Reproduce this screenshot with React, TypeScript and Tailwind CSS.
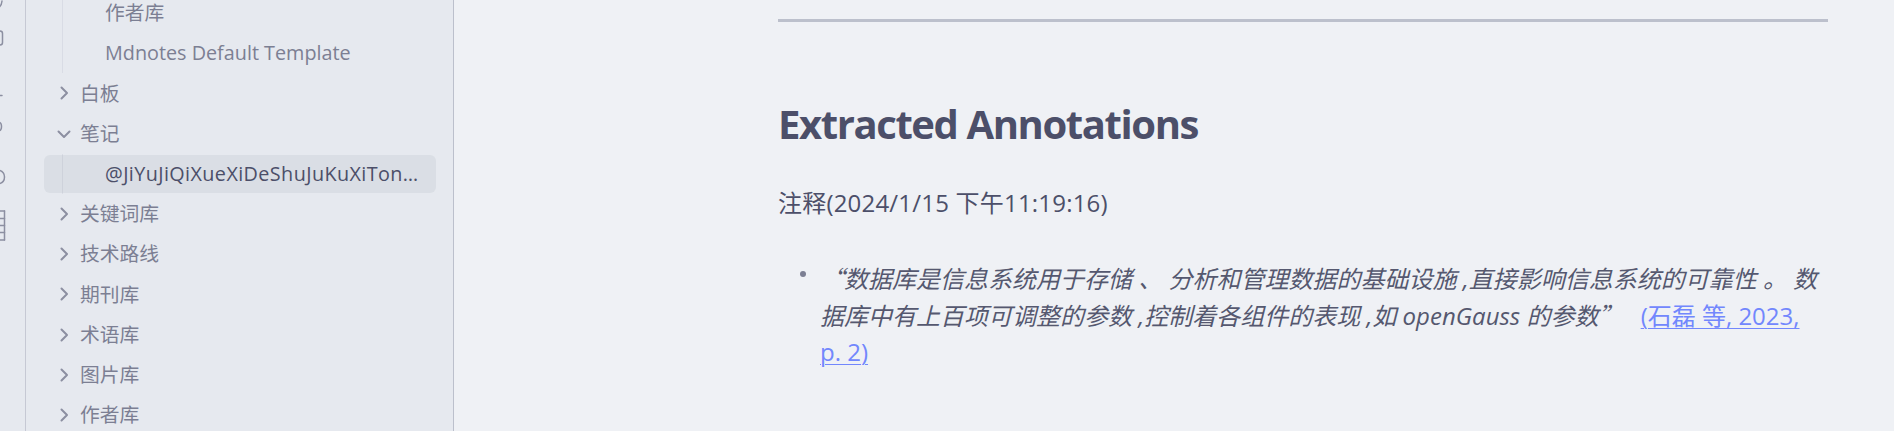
import React from "react";

function ChevronRight() {
  return (
    <svg width="16" height="16" viewBox="0 0 16 16" fill="none" className="shrink-0">
      <path d="M5.5 2.5 L11 8 L5.5 13.5" stroke="#8c8fa1" strokeWidth="2" strokeLinecap="round" strokeLinejoin="round" />
    </svg>
  );
}

function ChevronDown() {
  return (
    <svg width="16" height="16" viewBox="0 0 16 16" fill="none" className="shrink-0">
      <path d="M2.5 5.5 L8 11 L13.5 5.5" stroke="#8c8fa1" strokeWidth="2" strokeLinecap="round" strokeLinejoin="round" />
    </svg>
  );
}

function FolderRow({ name, open }: { name: string; open?: boolean }) {
  return (
    <div className="ml-[18px] w-[392px] h-[40.2px] py-px">
      <div className="h-full flex items-center pl-[12px] gap-[8px] text-[19.8px] text-[#7c7f93]">
        {open ? <ChevronDown /> : <ChevronRight />}
        <span>{name}</span>
      </div>
    </div>
  );
}

function ChildRow({ name, active }: { name: string; active?: boolean }) {
  return (
    <div className="h-[40.2px] py-px">
      <div
        className={
          active
            ? "-ml-[19px] w-[392px] h-full rounded-md flex items-center pl-[61px] text-[19.8px] tracking-[0.4px] text-[#4c4f69] bg-[#4c4f69]/[0.07]"
            : "-ml-[19px] w-[392px] h-full rounded-md flex items-center pl-[61px] text-[19.8px] text-[#7c7f93]"
        }
      >
        <span className="truncate pr-[16px]">{name}</span>
      </div>
    </div>
  );
}

function Ribbon() {
  return (
    <div className="w-[26px] shrink-0 bg-[#e6e9ef] border-r border-[#c6c9d4] overflow-hidden">
      <svg width="25" height="431" viewBox="0 0 25 431" fill="none" stroke="#8c8fa1" strokeWidth="1.5" strokeLinecap="round">
        <path d="M-3 8 Q1.5 7 2 1" />
        <path d="M-4 31 H0 Q2.5 31 2.5 33.5 V42.5 Q2.5 45 0 45 H-4" />
        <path d="M-1 95.5 H2" />
        <path d="M-2 122 Q1.5 122 1.5 126.5 Q1.5 131 -2 131" />
        <path d="M-2 170 Q4.5 171 4.5 177 Q4.5 183 -2 184" />
        <path d="M4.5 211 V240" />
        <path d="M-2 211 H4.5 M-2 218.5 H4.5 M-2 225.5 H4.5 M-2 232.5 H4.5 M-2 240 H4.5" />
      </svg>
    </div>
  );
}

function Sidebar() {
  return (
    <div className="w-[428px] shrink-0 bg-[#e6e9ef] border-r border-[#bcc0cc] overflow-hidden">
      <div className="-mt-[7px]">
        <div className="ml-[36px] border-l border-[#d9dce5]">
          <ChildRow name="作者库" />
          <ChildRow name="Mdnotes Default Template" />
        </div>
        <FolderRow name="白板" />
        <FolderRow name="笔记" open />
        <div className="ml-[36px] border-l border-[#d9dce5]">
          <ChildRow name="@JiYuJiQiXueXiDeShuJuKuXiTongCanShuYouHuaYanJiuZongShu" active />
        </div>
        <FolderRow name="关键词库" />
        <FolderRow name="技术路线" />
        <FolderRow name="期刊库" />
        <FolderRow name="术语库" />
        <FolderRow name="图片库" />
        <FolderRow name="作者库" />
      </div>
    </div>
  );
}

function Main() {
  const cjk = "font-['Noto_Sans_CJK_SC',sans-serif]";
  return (
    <div className="flex-1 bg-[#eff1f5] pl-[324px] pt-[19px] overflow-hidden">
      <div className="w-[1050px]">
        <div className="h-[3px] bg-[#bcc0cc]" />
        <h2 className="mt-[78px] text-[40px] leading-[48px] font-bold tracking-[-0.035em] text-[#4c4f69]">
          Extracted Annotations
        </h2>
        <p className="mt-[37px] text-[24px] leading-[36px] tracking-[0.2px] text-[#4c4f69]">注释(2024/1/15 下午11:19:16)</p>
        <ul className="mt-[39px]">
          <li className="flex text-[24px] leading-[36px] text-[#55586f]">
            <span className="w-[42px] shrink-0 pl-[22px] pt-[11px]">
              <span className="block size-[6px] rounded-full bg-[#7c7f93]" />
            </span>
            <span>
              <em className="italic">
                <span className={cjk}>“</span>数据库是信息系统用于存储 、 分析和管理数据的基础设施 ,直接影响信息系统的可靠性 。 数
                <br />
                据库中有上百项可调整的参数 ,控制着各组件的表现 ,如 openGauss 的参数<span className={cjk}>”</span>
              </em>{" "}
              <a className="ml-[12px] text-[#7287fd] underline decoration-1 underline-offset-[3px]" href="#">
                (石磊 等, 2023, <br />
                p. 2)
              </a>
            </span>
          </li>
        </ul>
      </div>
    </div>
  );
}

export default function App() {
  return (
    <div className="flex w-[1894px] h-[431px] overflow-hidden font-['Open_Sans','Noto_Sans_CJK_SC',sans-serif]">
      <Ribbon />
      <Sidebar />
      <Main />
    </div>
  );
}
